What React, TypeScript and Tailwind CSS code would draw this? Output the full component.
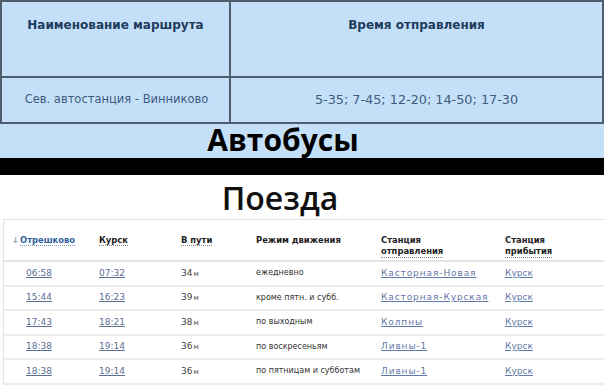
import React from "react";

const rows = [
  { d: "06:58", a: "07:32", t: "34", m: "ежедневно", s: "Касторная-Новая" },
  { d: "15:44", a: "16:23", t: "39", m: "кроме пятн. и субб.", s: "Касторная-Курская" },
  { d: "17:43", a: "18:21", t: "38", m: "по выходным", s: "Колпны" },
  { d: "18:38", a: "19:14", t: "36", m: "по воскресеньям", s: "Ливны-1" },
  { d: "18:38", a: "19:14", t: "36", m: "по пятницам и субботам", s: "Ливны-1" },
];

const grid = "grid grid-cols-[87px_82px_75px_125px_124px_1fr]";

export default function App() {
  return (
    <div className="w-[604px] h-[390px] overflow-hidden bg-white" style={{ fontFamily: "'DejaVu Sans', Verdana, sans-serif" }}>
      {/* Buses */}
      <div className="bg-[#c4e0f9]">
        <div className="border-2 border-[#4e5e6e] h-[124px] grid grid-cols-[229px_1fr] grid-rows-[76px_1fr]">
          <div className="border-r-2 border-b-2 border-[#4e5e6e] flex justify-center pt-[14px] text-[12px] font-bold text-[#1f3b5e]">
            Наименование маршрута
          </div>
          <div className="border-b-2 border-[#4e5e6e] flex justify-center pt-[14px] text-[12px] font-bold text-[#1f3b5e]">
            Время отправления
          </div>
          <div className="border-r-2 border-[#4e5e6e] flex items-center justify-center pl-[2px] text-[11.5px] text-[#3d5b7c]">
            Сев. автостанция - Винниково
          </div>
          <div className="flex items-center justify-center text-[12.8px] text-[#3d5b7c]">
            5-35; 7-45; 12-20; 14-50; 17-30
          </div>
        </div>
        <div className="h-[34px] flex items-center justify-center pr-[38px] text-[30px] font-bold text-black leading-none pb-[2px]" style={{ fontFamily: "'Open Sans', sans-serif" }}>
          Автобусы
        </div>
      </div>
      <div className="h-[17px] bg-black" />

      {/* Trains */}
      <div className="h-[44px] flex items-center justify-center pr-[44px] pt-[2px] text-[32px] font-semibold text-[#111] leading-none" style={{ fontFamily: "'Open Sans', sans-serif" }}>
        Поезда
      </div>
      <div className="ml-[3px] border-l border-t border-[#e4e4e4] pt-[6px]">
        <div className={`${grid} pl-[8px] h-[36px] pt-[9px] text-[8.4px] font-bold text-[#222] leading-[11px] border-b-2 border-[#e6e6e6]`}>
          <div className="text-[#2f5f9c]">
            <span className="text-[#8aa] mr-[1px]">↓</span>
            <span className="border-b border-dotted border-[#7a9ac0]">Отрешково</span>
          </div>
          <div><span className="border-b border-dotted border-[#888]">Курск</span></div>
          <div><span className="border-b border-dotted border-[#888]">В пути</span></div>
          <div>Режим движения</div>
          <div className="flex flex-col items-start">
            <span>Станция</span>
            <span className="border-b border-dotted border-[#888]">отправления</span>
          </div>
          <div className="flex flex-col items-start">
            <span>Станция</span>
            <span className="border-b border-dotted border-[#888]">прибытия</span>
          </div>
        </div>
        {rows.map((r, i) => (
          <div key={i} className={`${grid} pl-[8px] h-[24.5px] items-center text-[9px] text-[#444] border-b-2 border-[#ececec]`}>
            <div className="pl-[14px]"><span className="underline text-[#5b6f92]">{r.d}</span></div>
            <div><span className="underline text-[#5b6f92]">{r.a}</span></div>
            <div>{r.t}<span className="text-[7px] ml-[1px]">м</span></div>
            <div className="text-[8px] text-[#333]">{r.m}</div>
            <div><span className="underline tracking-[0.9px] text-[#5f79a8]">{r.s}</span></div>
            <div><span className="underline text-[#5f79a8]">Курск</span></div>
          </div>
        ))}
      </div>
    </div>
  );
}
